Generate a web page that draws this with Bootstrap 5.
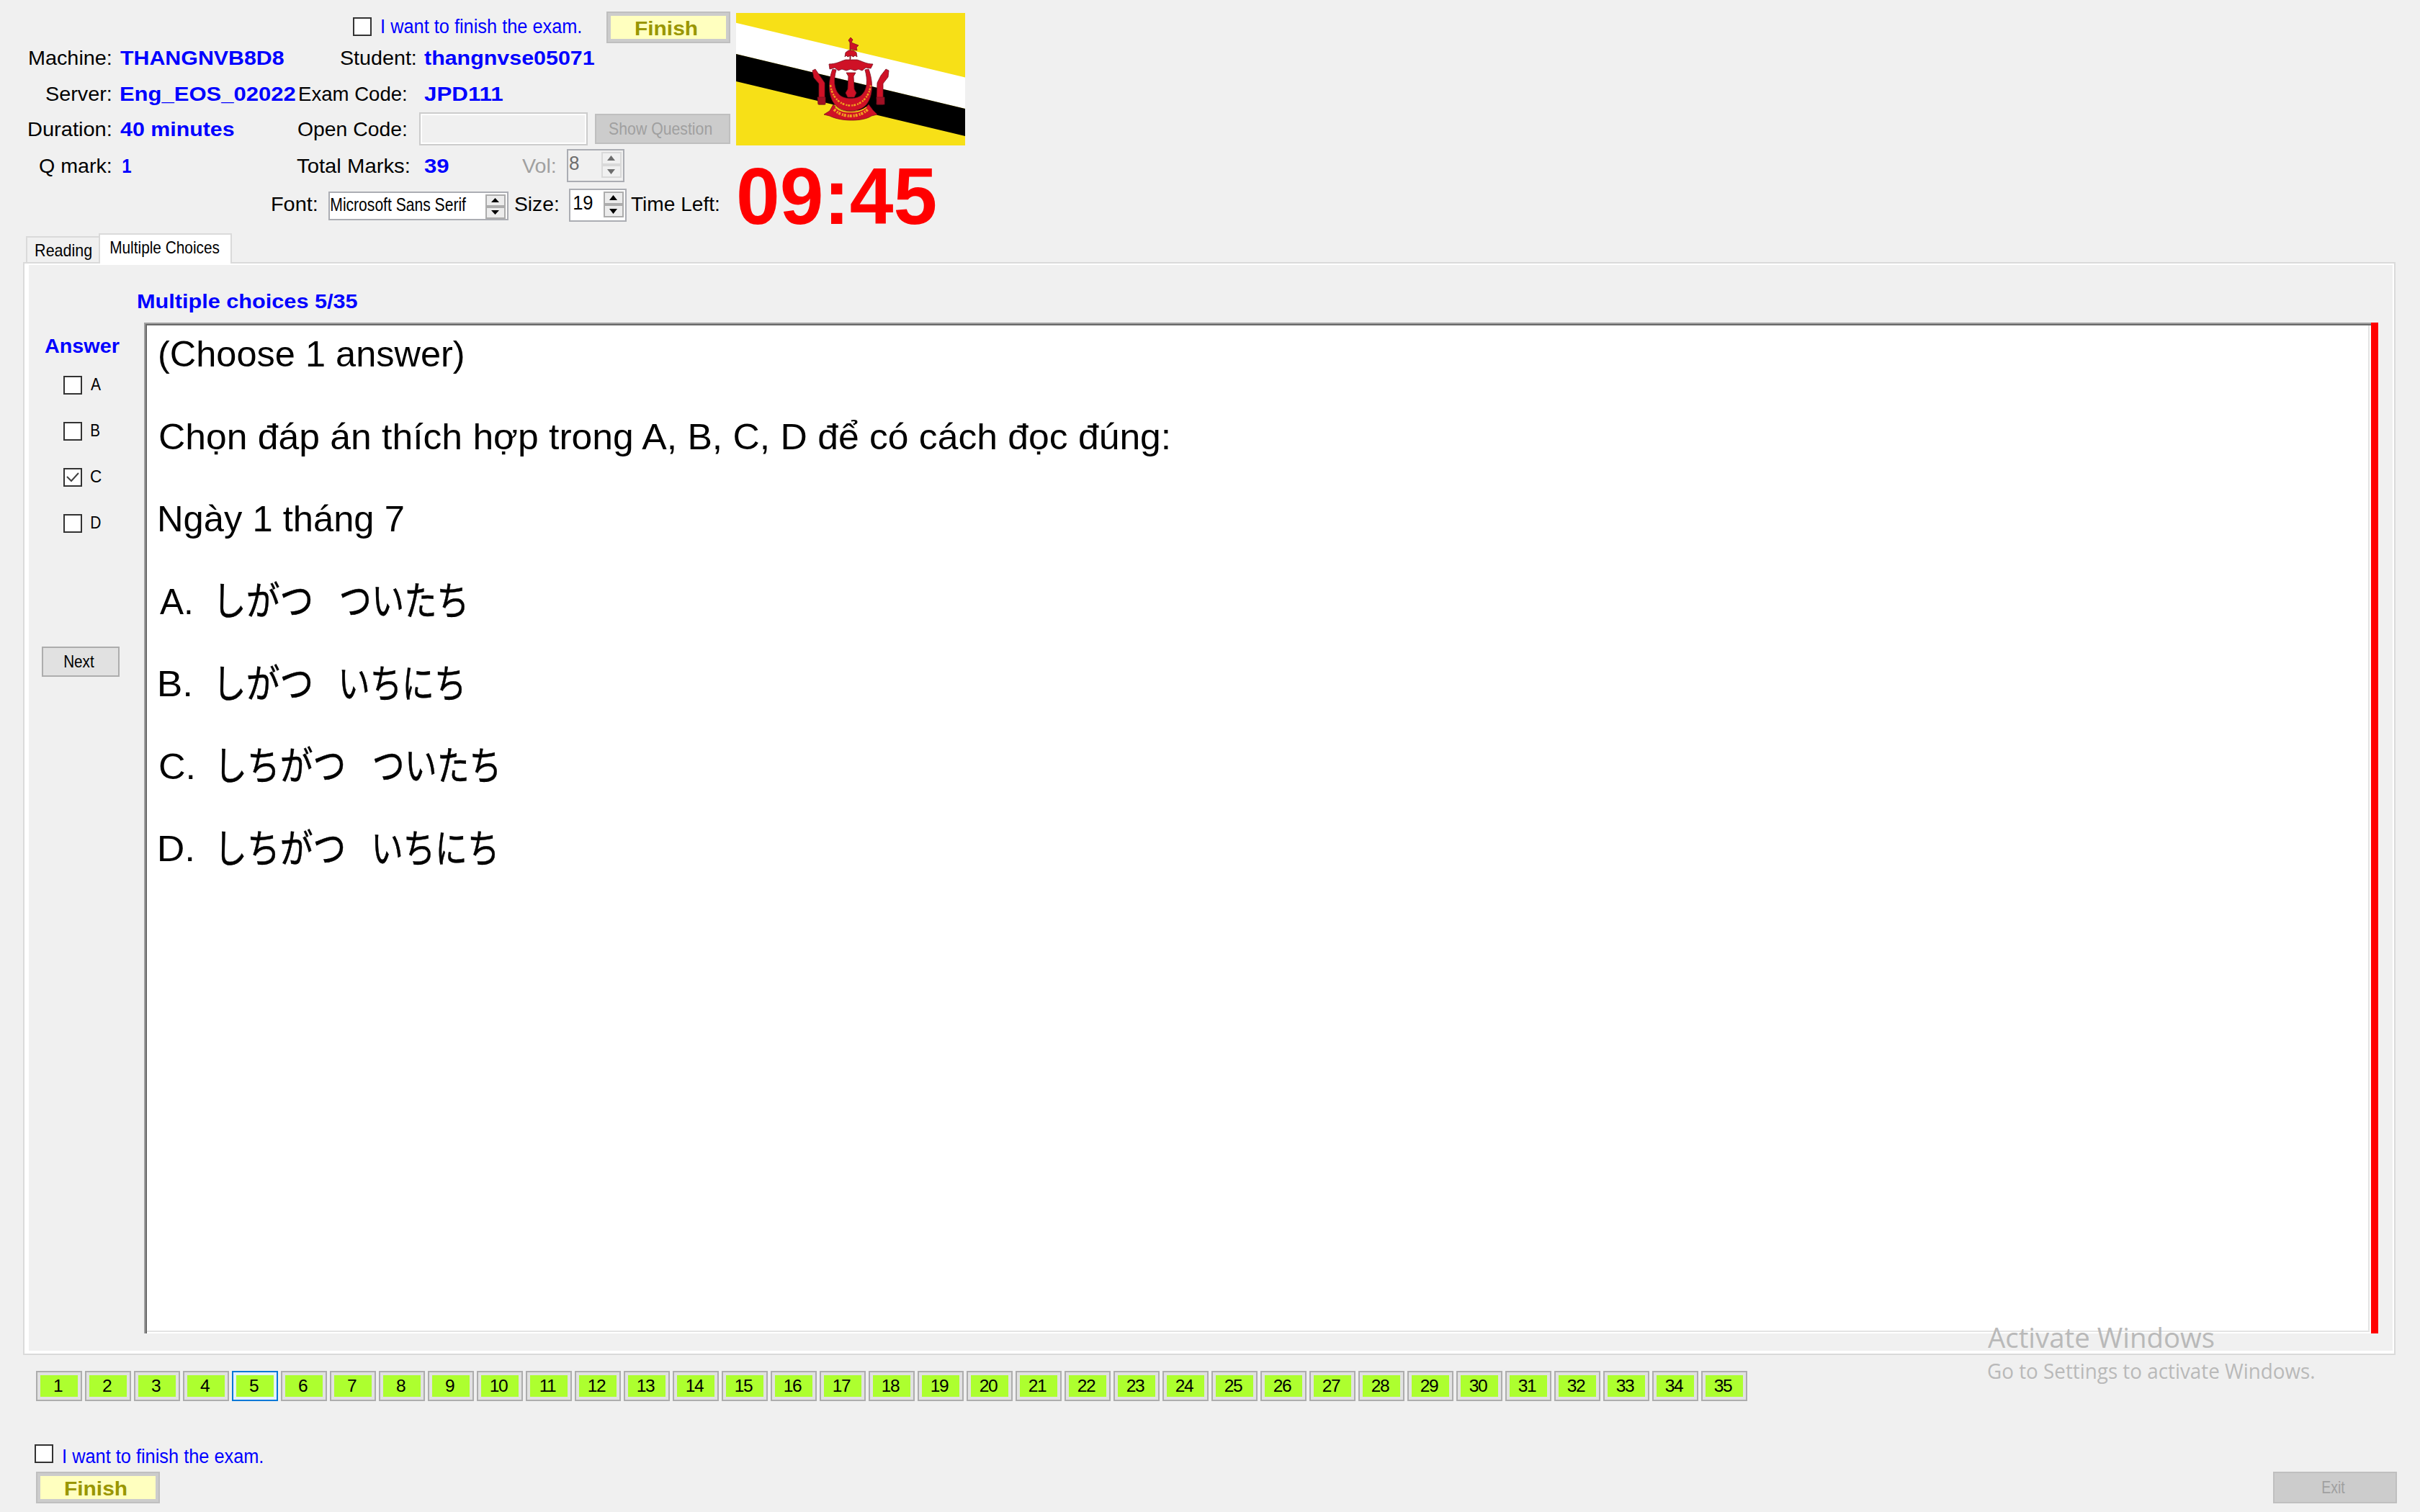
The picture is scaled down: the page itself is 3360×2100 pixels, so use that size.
<!DOCTYPE html>
<html lang="vi">
<head>
<meta charset="utf-8">
<meta name="viewport" content="width=device-width, initial-scale=1">
<title>Exam client</title>
<link href="https://cdn.jsdelivr.net/npm/bootstrap@5.3.0/dist/css/bootstrap.min.css" rel="stylesheet">
<style>
body{background:#f0f0f0;color:#000;font-family:"Liberation Sans",Arial,"Noto Sans CJK JP",sans-serif;font-size:28px;line-height:1;width:3360px;height:2100px;overflow:hidden}
.fit{display:inline-block;white-space:nowrap;line-height:36px;transform-origin:0 50%;flex:none;text-align:left}
.blue{color:#00f}
.s25{font-size:25px}
.s24{font-size:24px}
.s27{font-size:27px}
.top-area{height:324px}
.info{width:1022px}
.r-first{height:55px;padding:16px 8px 0 490px}
.r-first>.fit{margin:3px 0 0 14px}
.r-first .tick{margin-top:8px}
.tick{width:26px;height:26px;background:#fff;border:2px solid #333;flex:none;display:block}
.tick svg{display:block}
.info-row{display:grid;grid-template-columns:154px 258px 152px 1fr;align-items:center}
.info-row>div{white-space:nowrap}
.info-row>div>.fit{margin-top:2px}
.v1{padding-left:13px}
.v2{padding-left:25px}
.push{margin-right:-13px}
.h50{height:50px}.h48{height:48px}.h54{height:54px}
.code-box{width:234px;height:46px;border:2px solid #ccc;box-shadow:inset 0 0 0 2px #fff;background:#f0f0f0}
.code-cell{padding:0 8px 0 18px}
.btn-win{border:2px solid #adadad;background:#e1e1e1;color:#000;border-radius:0;padding:0;font-size:24px;line-height:1;display:flex;align-items:center;justify-content:center}
.btn-off{background:#ccc;border-color:#bfbfbf;color:#a0a0a0}
.show-q{width:188px;height:42px;padding-right:6px}
.finish{width:172px;height:44px;border:2px solid #bfbfbf;background:#ffffbf;box-shadow:inset 0 0 0 4px #ccc;color:#999600;padding:3px 6px 0 0;font-size:28px}
.spin{border:2px solid #abadb3;background:#fff;display:flex;justify-content:space-between}
.spin-off{background:#f0f0f0;color:#6d6d6d}
.spin svg{display:block;margin:2px 2px 0 0}
.vol-box{width:80px;height:46px;padding-left:2px}
.font-box{width:250px;height:40px;padding-left:2px;margin-top:4px}
.font-box .fit{margin-top:-2px}
.size-box{width:80px;height:46px;padding-left:5px;margin-top:2px}
.clock{color:#f00;font-weight:700;font-size:112px;padding:15px 0 0 4px}
.clock .fit{line-height:112px}
.flag{display:block;margin-top:18px}
.tabs{height:40px;padding-left:36px}
.tab-off{width:103px;height:36px;border:2px solid #dadada;border-width:2px 0 0 2px;padding-left:11px}
.tab-on{width:185px;height:42px;background:#fff;border:2px solid #dadada;border-bottom:0;padding-left:14px;margin-left:-2px;margin-bottom:-2px;position:relative}
.panel{width:3294px;height:1518px;margin-left:32px;border:2px solid #dadada}
.panel-in{height:1514px;border:solid #fff;border-width:2px 2px 4px 6px}
.q-title{height:80px;padding:33px 0 0 151px}
.side{width:160px}
.ans-title{padding:15px 0 0 22px;height:74px}
.opt{height:64px;padding-left:48px}
.opt .fit{margin:-6px 0 0 12px}
.next{width:108px;height:42px;margin:120px 0 0 18px;padding-right:4px}
.question{width:3092px;height:1404px;background:#fff;border:solid #a0a0a0;border-width:2px 0 0 2px}
.q-inner{height:1402px;border:solid #696969;border-width:2px 0 0 2px;box-shadow:inset -2px -2px #fff,inset -4px -4px #e3e3e3;padding:2px 0 0 18px;font-size:50px}
.q-line{height:114.5px;display:flex;align-items:center}
.q-line .fit{line-height:114px}
.q-first{height:95.6px;display:flex}
.q-first .fit{line-height:76.4px}
.letter{width:84px}
.kana{font-family:"Noto Sans CJK JP",sans-serif;font-size:55px;margin-top:-11px;-webkit-text-stroke:.5px #000}
.k1{width:168px}.k2{width:214px;padding-left:2px}
.redbar{width:10px;height:1404px;background:#f00}
.nums{padding:22px 0 0 50px;gap:4px}
.num{width:64px;height:42px;border:2px solid #adadad;background:#adff2f;box-shadow:inset 0 0 0 4px #e1e1e1;padding-right:4px;font-size:24.5px;letter-spacing:-1.4px;display:flex;align-items:center;justify-content:center;line-height:38px}
.num.now{border-color:#0078d7;box-shadow:inset 0 0 0 4px #e5f1fb}
.foot-check{padding:60px 0 0 48px;height:98px}
.foot-check .fit{margin:-1px 0 0 14px}
.foot-btns{padding:0 32px 0 50px}
.exit{width:172px;height:44px;padding-right:4px}
.watermark{position:absolute;left:2760px;top:1829px;color:#b9b9b9;font-family:"Open Sans","Noto Sans",sans-serif}
.watermark .fit{display:block}
.watermark .wm1{font-size:38px;line-height:56px}
.watermark .wm2{font-size:29px;line-height:38px}
</style>
<script src="https://cdn.jsdelivr.net/npm/bootstrap@5.3.0/dist/js/bootstrap.bundle.min.js"></script>
<style>
.one{margin-left:3px}
.vol-label{margin-left:102px;color:#a0a0a0}
.vol-box,.font-box{margin-left:16px}
.font-label{margin-left:378px}
.size-label{margin-left:9px}
.size-box{margin-left:15px}
.left-label{margin-left:6px}
</style>
</head>
<body>
<header class="top-area d-flex">
  <div class="info">
    <div class="r-first d-flex align-items-start">
      <span class="tick"></span><span class="fit blue s27" data-w="277">I want to finish the exam.</span>
      <button class="btn-win finish ms-auto"><span class="fit fw-bold" data-w="86">Finish</span></button>
    </div>
    <div class="info-row h50">
      <div class="text-end"><span class="fit" data-w="113">Machine:</span></div>
      <div class="v1"><span class="fit blue fw-bold" data-w="227">THANGNVB8D8</span></div>
      <div class="text-end push"><span class="fit" data-w="104">Student:</span></div>
      <div class="v2"><span class="fit blue fw-bold" data-w="236">thangnvse05071</span></div>
    </div>
    <div class="info-row h50">
      <div class="text-end"><span class="fit" data-w="90">Server:</span></div>
      <div class="v1"><span class="fit blue fw-bold" data-w="243">Eng_EOS_02022</span></div>
      <div class="text-end"><span class="fit" data-w="148">Exam Code:</span></div>
      <div class="v2"><span class="fit blue fw-bold" data-w="109">JPD111</span></div>
    </div>
    <div class="info-row h48">
      <div class="text-end"><span class="fit" data-w="114">Duration:</span></div>
      <div class="v1"><span class="fit blue fw-bold" data-w="158">40 minutes</span></div>
      <div class="text-end"><span class="fit" data-w="150">Open Code:</span></div>
      <div class="d-flex justify-content-between align-items-center code-cell"><div class="code-box"></div><button class="btn-win btn-off show-q"><span class="fit s24" data-w="142">Show Question</span></button></div>
    </div>
    <div class="info-row h54">
      <div class="text-end"><span class="fit" data-w="99">Q mark:</span></div>
      <div class="v1"><span class="fit blue fw-bold one" data-w="12">1</span></div>
      <div class="text-end"><span class="fit" data-w="156">Total Marks:</span></div>
      <div class="v2 d-flex align-items-center"><span class="fit blue fw-bold" data-w="34">39</span><span class="fit vol-label" data-w="46">Vol:</span>
        <div class="spin spin-off vol-box"><span class="fit" data-w="13">8</span>
          <svg width="28" height="36" viewBox="0 0 28 36"><path d="M1 1h26v16H1zM1 19h26v16H1z" fill="#f0f0f0" stroke="#d9d9d9" stroke-width="2"/><path d="M8 12h11l-5.500-7zM8 24h11l-5.500 7z" fill="#6d6d6d"/></svg></div></div>
    </div>
    <div class="d-flex align-items-center h54">
      <span class="fit font-label" data-w="62">Font:</span>
      <div class="spin font-box"><span class="fit s25" data-w="187">Microsoft Sans Serif</span>
        <svg width="28" height="34" viewBox="0 0 28 34"><path d="M1 1h26v15H1zM1 18h26v15H1z" fill="#ececec" stroke="#acacac" stroke-width="2"/><path d="M8 11h11l-5.500-6zM8 22h11l-5.500 6z"/></svg></div>
      <span class="fit size-label" data-w="60">Size:</span>
      <div class="spin size-box"><span class="fit" data-w="26">19</span>
        <svg width="28" height="36" viewBox="0 0 28 36"><path d="M1 1h26v16H1zM1 19h26v16H1z" fill="#ececec" stroke="#acacac" stroke-width="2"/><path d="M8 12h11l-5.500-7zM8 24h11l-5.500 7z"/></svg></div>
      <span class="fit left-label" data-w="122">Time Left:</span>
    </div>
  </div>
  <div>
    <svg class="flag" width="318" height="184" viewBox="0 0 318 184">
      <path fill="#f7e017" d="M0 0h318v184H0z"/>
      <path fill="#fff" d="M0 13.700L318 89.500V133L0 57z"/>
      <path d="M0 57L318 133V171L0 95z"/>
      <g fill="#cf1126" stroke="#7b1020" stroke-width=".8" stroke-linejoin="round">
        <path d="M158 65V41l-2-3 3-4 3 3-2 4 5 2 5 2-3 3 1 4-5-1-4-1v14z"/>
        <path d="M151 61l1-6 4-3h7l4 3 1 6-3-2-2 2-4-2-4 2-2-2z"/>
        <path d="M155 117l-3-6 3-5 1-18-3-5h13l-3 5 1 18 3 5-3 6z"/>
        <path d="M134 78c-6 16-7 36 3 49 10 12 34 12 44 0 10-13 9-33 3-49l-5 1c4 14 3 26-3 33-6 9-28 9-34 0-6-7-7-19-3-33z"/>
        <path d="M129 71c10 0 16-4 23-6h16c7 2 13 6 22 6l-3 6-7-1-5 4-5-2-5 2-6-2-6 2-6-2-5 2-5-4-7 2z"/>
        <path d="M106 80l4-2 6 9 7 10v30h-8V98l-7-8zM212 80l-4-2-7 9-5 10-1 30h9V98l7-9z"/>
        <path d="M113 117h11v10h-10zM195 117h11v10h-10z" fill="#a01024"/>
        <path d="M135 127c8 13 40 13 49 0l6 8 6 6-8 2c-12 8-42 8-58 0l-8-2 8-5z"/>
      </g>
      <g fill="none" stroke="#f0a020" stroke-width="4" stroke-dasharray="3 2 2 1">
        <path d="M131 100c5 38 51 38 56 0" stroke-width="2.500"/>
        <path d="M136 134c12 12 34 12 47 0"/>
      </g>
      <path d="M138 131c10 9 32 9 43 0" fill="none" stroke="#f7e017" stroke-width="1.200"/>
    </svg>
    <div class="clock"><span class="fit" data-w="273">09:45</span></div>
  </div>
</header>

<nav class="tabs d-flex align-items-end">
  <div class="tab-off"><span class="fit s24" data-w="78">Reading</span></div>
  <div class="tab-on"><span class="fit s24" data-w="152">Multiple Choices</span></div>
</nav>

<main class="panel"><div class="panel-in">
  <div class="q-title"><span class="fit blue fw-bold" data-w="305">Multiple choices 5/35</span></div>
  <div class="d-flex">
    <div class="side">
      <div class="ans-title"><span class="fit blue fw-bold" data-w="104">Answer</span></div>
      <div class="opt d-flex"><span class="tick"></span><span class="fit s24" data-w="14">A</span></div>
      <div class="opt d-flex"><span class="tick"></span><span class="fit s24" data-w="12">B</span></div>
      <div class="opt d-flex"><span class="tick"><svg width="22" height="22" viewBox="0 0 22 22"><path d="M3 10l6 6L19 5" fill="none" stroke="#404040" stroke-width="2"/></svg></span><span class="fit s24" data-w="15">C</span></div>
      <div class="opt d-flex"><span class="tick"></span><span class="fit s24" data-w="14">D</span></div>
      <button class="btn-win next"><span class="fit s24" data-w="42">Next</span></button>
    </div>
    <div class="question"><div class="q-inner">
      <div class="q-first"><span class="fit" data-w="421">(Choose 1 answer)</span></div>
      <div class="q-line"><span class="fit" data-w="1403">Chọn đáp án thích hợp trong A, B, C, D để có cách đọc đúng:</span></div>
      <div class="q-line"><span class="fit" data-w="338">Ngày 1 tháng 7</span></div>
      <div class="q-line"><div class="letter"><span class="fit" data-w="43">A.</span></div><div class="k1"><span class="fit kana" data-w="125">しがつ</span></div><span class="fit kana" data-w="171">ついたち</span></div>
      <div class="q-line"><div class="letter"><span class="fit" data-w="42">B.</span></div><div class="k1"><span class="fit kana" data-w="125">しがつ</span></div><span class="fit kana" data-w="167">いちにち</span></div>
      <div class="q-line"><div class="letter"><span class="fit" data-w="46">C.</span></div><div class="k2"><span class="fit kana" data-w="168">しちがつ</span></div><span class="fit kana" data-w="170">ついたち</span></div>
      <div class="q-line"><div class="letter"><span class="fit" data-w="45">D.</span></div><div class="k2"><span class="fit kana" data-w="168">しちがつ</span></div><span class="fit kana" data-w="167">いちにち</span></div>
    </div></div>
    <div class="redbar"></div>
  </div>
</div></main>

<div class="nums d-flex" id="nums"></div>

<footer>
  <div class="foot-check d-flex align-items-start"><span class="tick"></span><span class="fit blue s27" data-w="277">I want to finish the exam.</span></div>
  <div class="foot-btns d-flex justify-content-between">
    <button class="btn-win finish"><span class="fit fw-bold" data-w="86">Finish</span></button>
    <button class="btn-win btn-off exit"><span class="fit s24" data-w="32">Exit</span></button>
  </div>
</footer>

<div class="watermark"><span class="fit wm1" data-w="314">Activate Windows</span><span class="fit wm2" data-w="453">Go to Settings to activate Windows.</span></div>

<script>
const nums = document.getElementById('nums');
for (let i = 1; i <= 35; i++) {
  const b = document.createElement('div');
  b.className = 'num' + (i === 5 ? ' now' : '');
  b.textContent = i;
  nums.append(b);
}
// Stretch each label to its design width, measured on the visible glyphs.
const ctx = document.createElement('canvas').getContext('2d');
document.querySelectorAll('.fit').forEach(el => {
  const cs = getComputedStyle(el), w = +el.dataset.w;
  ctx.font = cs.fontWeight + ' ' + cs.fontSize + ' ' + cs.fontFamily;
  const m = ctx.measureText(el.textContent);
  const left = -m.actualBoundingBoxLeft, s = w / (m.actualBoundingBoxRight - left);
  el.style.width = w + 'px';
  el.style.transform = 'translateX(' + (-left * s) + 'px) scaleX(' + s + ')';
});
</script>
</body>
</html>
